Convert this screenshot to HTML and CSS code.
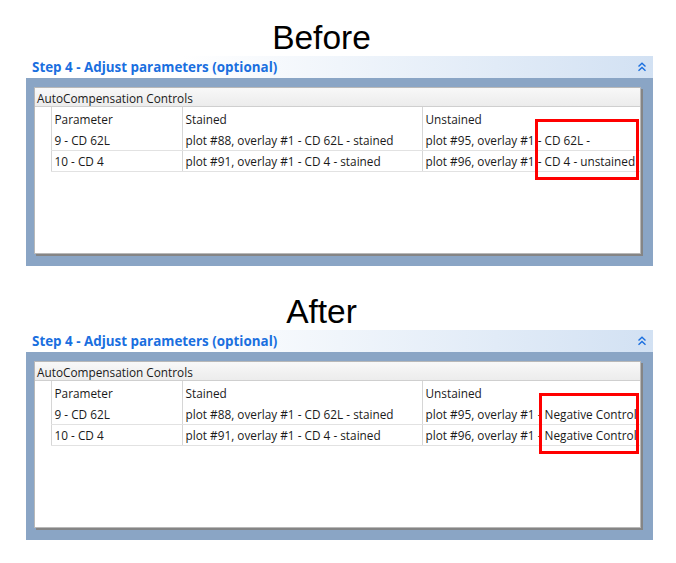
FILE: index.html
```html
<!DOCTYPE html>
<html lang="en">
<head>
    <meta charset="UTF-8">
    <meta name="viewport" content="width=device-width, initial-scale=1.0">
    <title>AutoCompensation - Before / After</title>
    <link rel="stylesheet" href="styles.css">
</head>
<body>
<div class="page">
    <section class="shot">
        <h1 class="caption">Before</h1>
        <div class="step-header">
            <span class="step-title">Step 4 - Adjust parameters (optional)</span>
            <svg class="collapse" width="10" height="10" viewBox="0 0 10 10">
                <path d="M1.5 4.5 L5 1.2 L8.5 4.5 M1.5 8.8 L5 5.5 L8.5 8.8" fill="none" stroke="#1a6fdf" stroke-width="1.4"/>
            </svg>
        </div>
        <div class="step-body">
            <div class="groupbox">
                <div class="groupbox-title">AutoCompensation Controls</div>
                <div class="grid-wrap">
                    <table class="grid">
                        <colgroup>
                            <col class="col-row">
                            <col class="col-param">
                            <col class="col-stained">
                            <col class="col-unstained">
                        </colgroup>
                        <tr class="head">
                            <td class="rowhead"></td>
                            <td>Parameter</td>
                            <td>Stained</td>
                            <td>Unstained</td>
                        </tr>
                        <tr>
                            <td class="rowhead"></td>
                            <td>9 - CD 62L</td>
                            <td>plot #88, overlay #1 - CD 62L - stained</td>
                            <td>plot #95, overlay #1 - CD 62L -</td>
                        </tr>
                        <tr>
                            <td class="rowhead"></td>
                            <td>10 - CD 4</td>
                            <td>plot #91, overlay #1 - CD 4 - stained</td>
                            <td>plot #96, overlay #1 - CD 4 - unstained</td>
                        </tr>
                    </table>
                </div>
            </div>
        </div>
        <div class="callout callout-before"></div>
    </section>

    <section class="shot">
        <h1 class="caption">After</h1>
        <div class="step-header">
            <span class="step-title">Step 4 - Adjust parameters (optional)</span>
            <svg class="collapse" width="10" height="10" viewBox="0 0 10 10">
                <path d="M1.5 4.5 L5 1.2 L8.5 4.5 M1.5 8.8 L5 5.5 L8.5 8.8" fill="none" stroke="#1a6fdf" stroke-width="1.4"/>
            </svg>
        </div>
        <div class="step-body">
            <div class="groupbox">
                <div class="groupbox-title">AutoCompensation Controls</div>
                <div class="grid-wrap">
                    <table class="grid">
                        <colgroup>
                            <col class="col-row">
                            <col class="col-param">
                            <col class="col-stained">
                            <col class="col-unstained">
                        </colgroup>
                        <tr class="head">
                            <td class="rowhead"></td>
                            <td>Parameter</td>
                            <td>Stained</td>
                            <td>Unstained</td>
                        </tr>
                        <tr>
                            <td class="rowhead"></td>
                            <td>9 - CD 62L</td>
                            <td>plot #88, overlay #1 - CD 62L - stained</td>
                            <td>plot #95, overlay #1 - Negative Control</td>
                        </tr>
                        <tr>
                            <td class="rowhead"></td>
                            <td>10 - CD 4</td>
                            <td>plot #91, overlay #1 - CD 4 - stained</td>
                            <td>plot #96, overlay #1 - Negative Control</td>
                        </tr>
                    </table>
                </div>
            </div>
        </div>
        <div class="callout callout-after"></div>
    </section>
</div>
</body>
</html>
```

FILE: styles.css
```css
body {
    margin: 0;
    background-color: #ffffff;
    font-family: "Open Sans", "Noto Sans", sans-serif;
    color: #1a1a1a;
}

.shot {
    position: relative;
    height: 274px;
}

.caption {
    margin: 0;
    height: 56px;
    box-sizing: border-box;
    padding: 21px 33px 0 0;
    font-family: "Liberation Sans", Arial, sans-serif;
    font-weight: normal;
    font-size: 33.5px;
    line-height: 33px;
    text-align: center;
    color: #000;
}

.step-header {
    display: flex;
    align-items: center;
    justify-content: space-between;
    height: 22px;
    margin: 0 23px 0 26px;
    padding: 0 6px;
    background: linear-gradient(to right, #ffffff 25%, #d2e1f3);
}

.step-title {
    font-weight: 700;
    font-size: 13.4px;
    color: #1a6fdf;
}

.collapse {
    display: block;
}

.step-body {
    height: 188px;
    box-sizing: border-box;
    margin: 0 23px 0 26px;
    padding: 9px 10px 10px 8px;
    background-color: #8aa5c5;
}

.groupbox {
    height: calc(100% - 2px);
    margin-right: 2px;
    box-sizing: border-box;
    background-color: #fff;
    border: 1px solid #b8b8b8;
    box-shadow: 2px 2px 0 #858585;
    font-size: 11.8px;
}

.groupbox-title {
    height: 18px;
    line-height: 20px;
    padding-left: 2px;
    background: linear-gradient(#f8f8f8, #ececec);
    border-bottom: 1px solid #cfcfcf;
}

.grid-wrap {
    padding-left: 2px;
}

.grid {
    width: 100%;
    table-layout: fixed;
    border-collapse: collapse;
}

.col-row { width: 14px; }
.col-param { width: 131px; }
.col-stained { width: 240px; }

.grid td {
    height: 21px;
    padding: 1px 0 0 3px;
    box-sizing: border-box;
    white-space: nowrap;
    overflow: hidden;
    border-left: 1px solid #d6d6d6;
    border-bottom: 1px solid #e2e2e2;
}

.grid .head td {
    height: 22px;
    padding-top: 2px;
    border-bottom: none;
}

.grid td.rowhead {
    padding: 0;
    border-left: none;
    border-bottom: none;
}

/* red annotation boxes drawn over the grid */
.callout {
    position: absolute;
    top: 119px;
    height: 61px;
    box-sizing: border-box;
    border: 3px solid #ff0000;
}

.callout-before {
    left: 535px;
    width: 104px;
}

.callout-after {
    left: 539px;
    width: 100px;
}
```
